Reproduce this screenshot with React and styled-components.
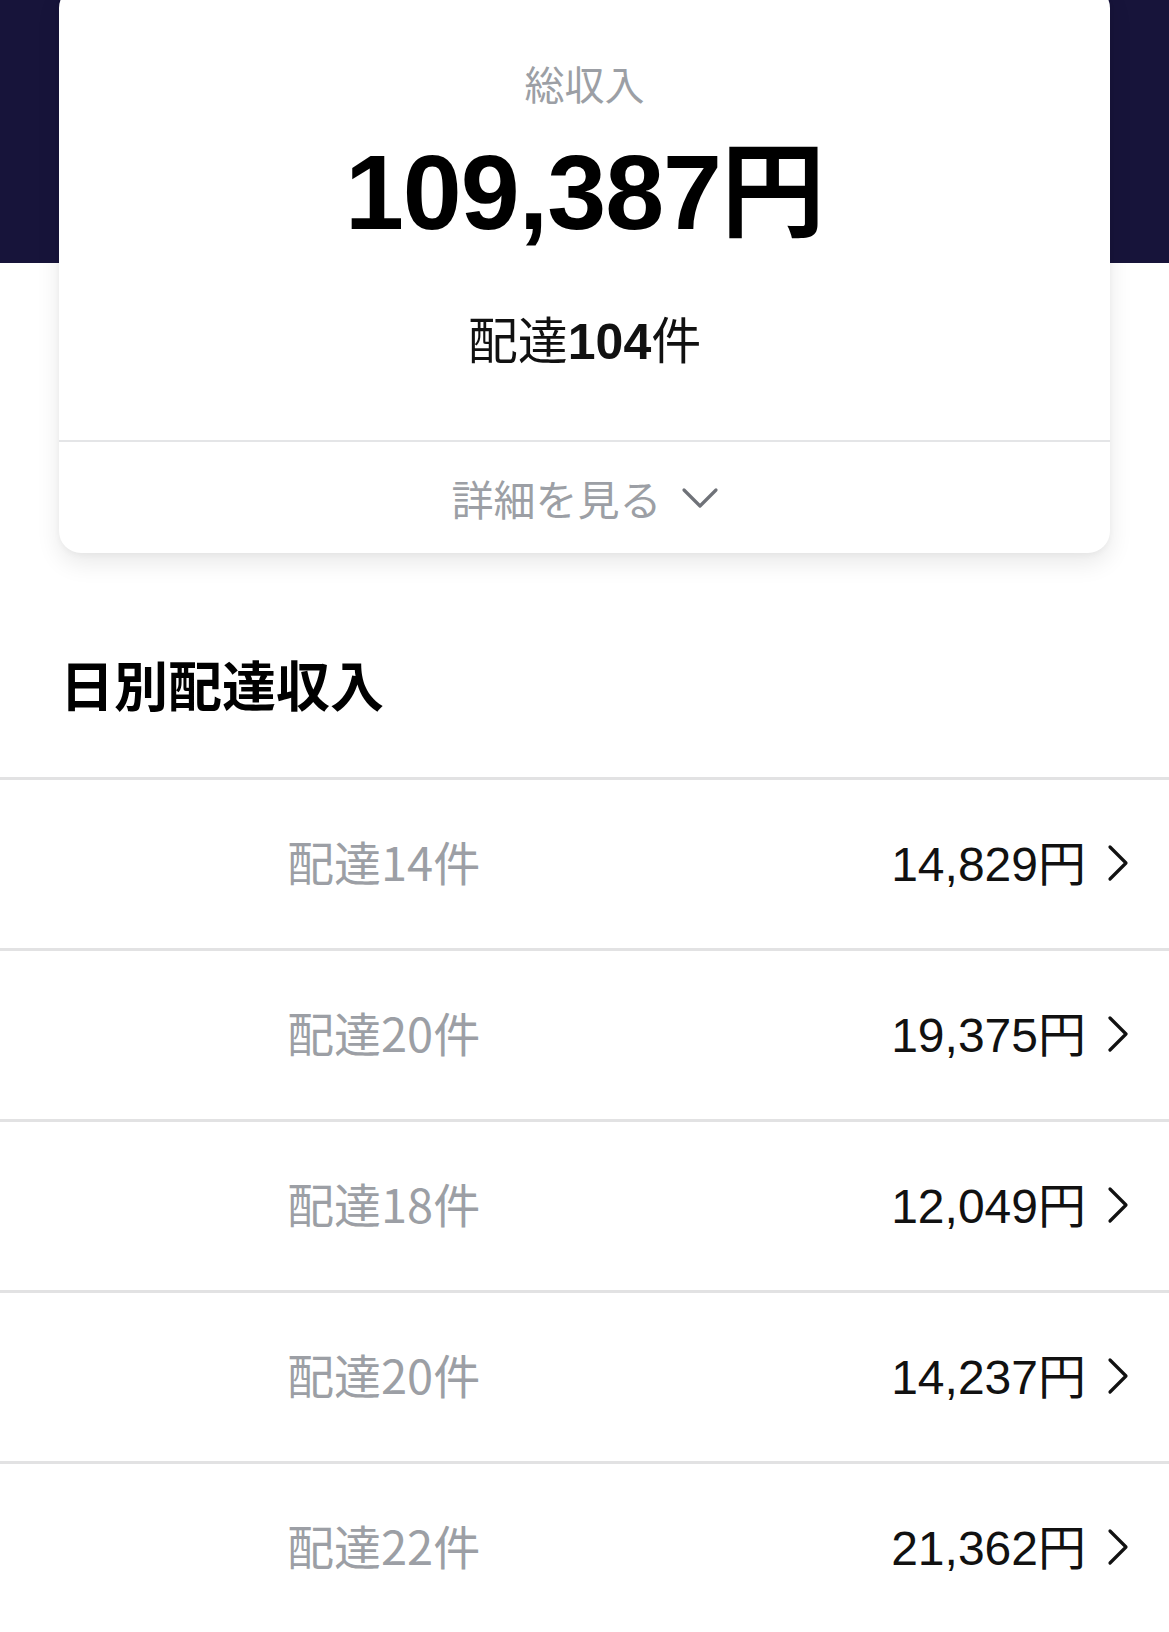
import styled, { createGlobalStyle } from 'styled-components';

const days = [
  { count: 14, amount: '14,829' },
  { count: 20, amount: '19,375' },
  { count: 18, amount: '12,049' },
  { count: 20, amount: '14,237' },
  { count: 22, amount: '21,362' },
];

const GlobalStyle = createGlobalStyle`
  body {
    margin: 0;
    background: #ffffff;
    font-family: "Liberation Sans", "Noto Sans CJK JP", sans-serif;
    color: #111111;
  }
`;

const App = () => {
  return (
    <Page>
      <GlobalStyle />
      <Hero>
        <SummaryCard>
          <SummaryBody>
            <Label>総収入</Label>
            <Total>
              109,387<Yen>円</Yen>
            </Total>
            <Count>
              配達<strong>104</strong>件
            </Count>
          </SummaryBody>
          <DetailToggle>
            詳細を見る
            <svg width="40" height="24" viewBox="0 0 40 24" fill="none">
              <polyline
                points="4,4 20,20 36,4"
                stroke="#6f7278"
                strokeWidth="3.2"
                strokeLinecap="round"
                strokeLinejoin="round"
              />
            </svg>
          </DetailToggle>
        </SummaryCard>
      </Hero>

      <SectionTitle>日別配達収入</SectionTitle>

      <DayList>
        {days.map((day, i) => (
          <DayRow key={i}>
            <DayCount>配達{day.count}件</DayCount>
            <DayAmount>
              {day.amount}円
              <Chevron width="24" height="38" viewBox="0 0 24 38" fill="none">
                <polyline
                  points="4,3 20,19 4,35"
                  stroke="#111"
                  strokeWidth="3.2"
                  strokeLinecap="round"
                  strokeLinejoin="round"
                />
              </Chevron>
            </DayAmount>
          </DayRow>
        ))}
      </DayList>
    </Page>
  );
};

const Page = styled.div`
  width: 1169px;
  min-height: 1632px;
  overflow: hidden;
`;

const Hero = styled.div`
  display: flow-root;
  background: linear-gradient(to bottom, #17143a 0, #17143a 263px, #ffffff 263px);
  padding: 0 59px;
`;

const SummaryCard = styled.div`
  margin-top: -14px;
  background: #ffffff;
  border-radius: 22px;
  box-shadow: 0 10px 24px rgba(0, 0, 0, 0.09), 0 2px 6px rgba(0, 0, 0, 0.04);
  display: flex;
  flex-direction: column;
`;

const SummaryBody = styled.div`
  display: flex;
  flex-direction: column;
  align-items: center;
  padding: 77px 0 73px;
  border-bottom: 2px solid #e4e5e7;
`;

const Label = styled.div`
  font-family: "Noto Sans CJK JP", sans-serif;
  font-size: 40px;
  line-height: 40px;
  color: #9c9fa5;
`;

const Total = styled.div`
  margin-top: 21px;
  font-size: 106px;
  line-height: 120px;
  font-weight: 700;
  color: #000;
  letter-spacing: -1px;
`;

const Yen = styled.span`
  font-family: "Noto Sans CJK JP", sans-serif;
  font-weight: 700;
  font-size: 104px;
`;

const Count = styled.div`
  margin-top: 60px;
  font-family: "Noto Sans CJK JP", sans-serif;
  font-size: 50px;
  line-height: 50px;
  color: #111;

  strong {
    font-family: "Liberation Sans", sans-serif;
    font-weight: 700;
  }
`;

const DetailToggle = styled.div`
  height: 111px;
  display: flex;
  align-items: center;
  justify-content: center;
  gap: 18px;
  font-family: "Noto Sans CJK JP", sans-serif;
  font-size: 42px;
  color: #9c9fa5;
  padding-left: 2px;
`;

const SectionTitle = styled.h2`
  margin: 101px 0 63px 60px;
  font-family: "Noto Sans CJK JP", sans-serif;
  font-size: 54px;
  line-height: 60px;
  font-weight: 700;
  color: #000;
`;

const DayList = styled.div`
  display: flex;
  flex-direction: column;
`;

const DayRow = styled.div`
  box-sizing: border-box;
  height: 171px;
  border-top: 3px solid #e2e2e3;
  display: flex;
  align-items: center;
  justify-content: space-between;
  padding: 0 39px 8px 287px;
`;

const DayCount = styled.div`
  font-size: 47px;
  color: #9c9fa5;
  font-family: "Noto Sans CJK JP", sans-serif;
`;

const DayAmount = styled.div`
  display: flex;
  align-items: center;
  gap: 20px;
  font-size: 48px;
  color: #111;
`;

const Chevron = styled.svg`
  margin-top: 6px;
`;

export default App;
